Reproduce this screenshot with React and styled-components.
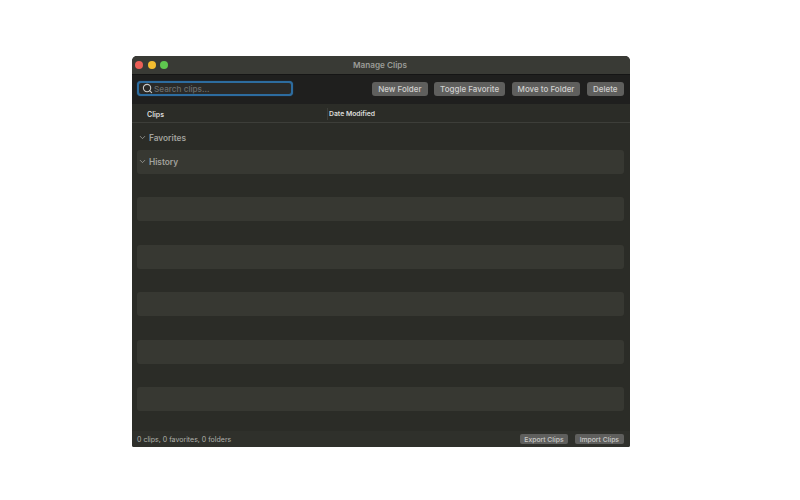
import React from "react";
import styled, { createGlobalStyle } from "styled-components";
import { Search, ChevronDown } from "lucide-react";

const GlobalStyle = createGlobalStyle`
  html, body {
    margin: 0;
    padding: 0;
    background: #fff;
    font-family: "Inter", "Liberation Sans", sans-serif;
  }
`;

const toolbarButtons = ["New Folder", "Toggle Favorite", "Move to Folder", "Delete"];
const rows = [
  { label: "Favorites" },
  { label: "History" },
  {},
  {},
  {},
  {},
  {},
  {},
  {},
  {},
  {},
  {},
  {},
];

export default function App() {
  return (
    <Page>
      <GlobalStyle />
      <Window>
        <TitleBar>
          <Lights>
            <Light color="#ec5f57" />
            <Light color="#f4bd30" />
            <Light color="#5fc84f" />
          </Lights>
          <Title>Manage Clips</Title>
        </TitleBar>
        <Toolbar>
          <SearchBox>
            <Search size={11} strokeWidth={2.4} color="#c9c9c7" />
            <SearchInput placeholder="Search clips..." />
          </SearchBox>
          <Actions>
            {toolbarButtons.map((b) => (
              <ToolButton key={b}>{b}</ToolButton>
            ))}
          </Actions>
        </Toolbar>
        <ColumnHeader>
          <ClipsColumn>Clips</ClipsColumn>
          <DateColumn>Date Modified</DateColumn>
        </ColumnHeader>
        <List>
          {rows.map((row, i) => (
            <Row key={i} $striped={i % 2 === 1}>
              {row.label && (
                <>
                  <ChevronDown size={9} strokeWidth={2} color="#a9a9a5" />
                  <RowLabel>{row.label}</RowLabel>
                </>
              )}
            </Row>
          ))}
        </List>
        <Footer>
          <Status>0 clips, 0 favorites, 0 folders</Status>
          <FooterActions>
            <FooterButton>Export Clips</FooterButton>
            <FooterButton>Import Clips</FooterButton>
          </FooterActions>
        </Footer>
      </Window>
    </Page>
  );
}

const Page = styled.div`
  width: 800px;
  height: 500px;
  padding: 56px 0 0 132px;
  box-sizing: border-box;
  overflow: hidden;
`;

const Window = styled.div`
  width: 498px;
  height: 391px;
  display: flex;
  flex-direction: column;
  background: #2b2c27;
  border-radius: 5px 5px 2px 2px;
  overflow: hidden;
`;

const TitleBar = styled.div`
  height: 18px;
  display: flex;
  align-items: center;
  justify-content: center;
  position: relative;
  background: #393a35;
  flex-shrink: 0;
`;

const Lights = styled.div`
  position: absolute;
  left: 3px;
  top: 5px;
  display: flex;
  gap: 4.5px;
`;

const Light = styled.span`
  width: 8px;
  height: 8px;
  border-radius: 50%;
  background: ${(p) => p.color};
`;

const Title = styled.span`
  font-size: 8.2px;
  font-weight: 600;
  color: #9c9c98;
  margin-left: -2px;
`;

const Toolbar = styled.div`
  height: 30px;
  display: flex;
  align-items: center;
  justify-content: space-between;
  padding: 0 6.5px 2px 5px;
  background: #1f1f1e;
  border-top: 1px solid #151515;
  box-sizing: border-box;
  flex-shrink: 0;
`;

const SearchBox = styled.div`
  width: 156px;
  height: 15px;
  display: flex;
  align-items: center;
  gap: 1px;
  padding-left: 3px;
  box-sizing: border-box;
  background: #2a2a28;
  border: 2px solid #2d6c9f;
  border-radius: 4px;
  box-shadow: 0 0 1px #2d6c9f;
`;

const SearchInput = styled.input`
  flex: 1;
  min-width: 0;
  padding: 0;
  border: none;
  outline: none;
  background: transparent;
  font: 500 8.2px "Inter", "Liberation Sans", sans-serif;
  color: #d0d0d0;

  &::placeholder {
    color: #6b6d6c;
    opacity: 1;
  }
`;

const Actions = styled.div`
  display: flex;
  gap: 6.5px;
`;

const ToolButton = styled.button`
  height: 14px;
  padding: 0 6px;
  border: none;
  border-radius: 3px;
  background: #5f5f5d;
  color: #d0d0ce;
  font: 500 8px "Inter", "Liberation Sans", sans-serif;
  white-space: nowrap;
`;

const ColumnHeader = styled.div`
  height: 19px;
  display: flex;
  align-items: center;
  padding-top: 2px;
  background: #2b2c27;
  border-bottom: 1px solid #3d3e39;
  box-sizing: border-box;
  flex-shrink: 0;
  font-size: 7px;
  font-weight: 600;
  color: #dcdcda;
`;

const ClipsColumn = styled.div`
  width: 195px;
  padding-left: 15px;
  box-sizing: border-box;
`;

const DateColumn = styled.div`
  border-left: 1px solid #3d3e39;
  padding-left: 1px;
  font-size: 6.8px;
  line-height: 12px;
`;

const List = styled.div`
  flex: 1;
  min-height: 0;
  display: grid;
  grid-auto-rows: 23.75px;
  padding: 3px 6px 0 5px;
  overflow: hidden;
`;

const Row = styled.div`
  display: flex;
  align-items: center;
  gap: 2px;
  padding-left: 1px;
  border-radius: 3px;
  background: ${(p) => (p.$striped ? "#373832" : "transparent")};
`;

const RowLabel = styled.span`
  font-size: 8.3px;
  font-weight: 600;
  color: #a2a29e;
`;

const Footer = styled.div`
  height: 16px;
  display: flex;
  align-items: center;
  justify-content: space-between;
  padding: 0 6.5px 0 5px;
  background: #2f302b;
  flex-shrink: 0;
`;

const Status = styled.span`
  font-size: 7px;
  color: #b0b0ac;
`;

const FooterActions = styled.div`
  display: flex;
  gap: 7px;
`;

const FooterButton = styled.button`
  height: 10px;
  padding: 0 4.5px;
  border: none;
  border-radius: 2px;
  background: #5f5f5d;
  color: #c9c9c7;
  font: 500 6.8px "Inter", "Liberation Sans", sans-serif;
  white-space: nowrap;
`;
